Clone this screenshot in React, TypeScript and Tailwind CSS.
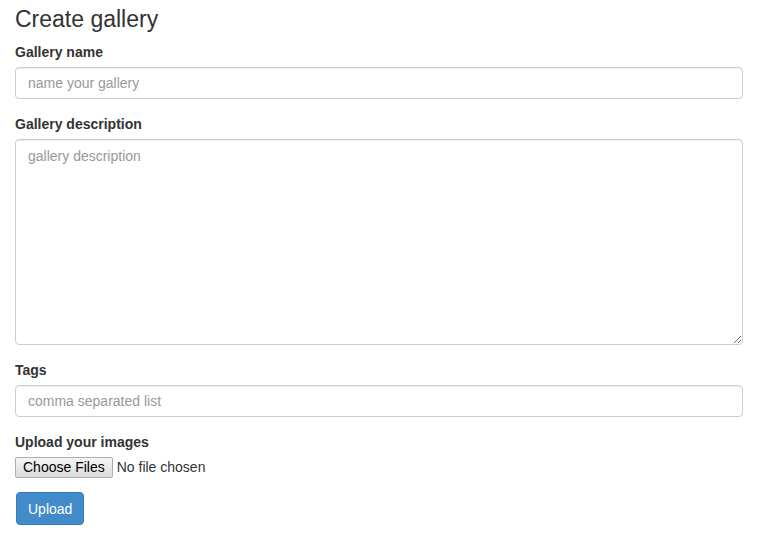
export default function App() {
  const field =
    'block w-full h-[32px] px-3 py-1.5 text-sm text-[#555] bg-white border border-[#ccc] rounded shadow-[inset_0_1px_1px_rgba(0,0,0,0.075)] placeholder:text-[#999] outline-none'
  const label = 'block mb-[5px] text-sm font-bold leading-5 text-[#333]'

  return (
    <div className="min-h-[560px] bg-white pl-[15px] pr-[18px] font-['Liberation_Sans',Arial,sans-serif] text-sm text-[#333]">
      <h3 className="pt-[6px] mb-[10px] text-[23px] leading-[26px] font-normal text-[#333]">Create gallery</h3>
      <form onSubmit={(e) => e.preventDefault()}>
        <div className="mb-[15px]">
          <label className={label}>Gallery name</label>
          <input type="text" placeholder="name your gallery" className={field} />
        </div>

        <div className="mb-[15px]">
          <label className={label}>Gallery description</label>
          <textarea
            placeholder="gallery description"
            className="block w-full h-[206px] px-3 py-1.5 text-sm leading-5 text-[#555] bg-white border border-[#ccc] rounded shadow-[inset_0_1px_1px_rgba(0,0,0,0.075)] placeholder:text-[#999] outline-none resize-y"
          />
        </div>

        <div className="mb-[15px]">
          <label className={label}>Tags</label>
          <input type="text" placeholder="comma separated list" className={field} />
        </div>

        <div className="mb-[15px]">
          <label className={label}>Upload your images</label>
          <div className="flex items-center h-5">
            <button
              type="button"
              className="h-[21px] px-[7px] text-sm leading-4 text-black border border-[#adadad] rounded-[2px] bg-gradient-to-b from-[#f5f5f5] to-[#dcdcdc]"
            >
              Choose Files
            </button>
            <span className="ml-1 text-sm text-[#333]">No file chosen</span>
          </div>
        </div>

        <button
          type="submit"
          className="ml-px h-[33px] px-[11px] text-sm text-white bg-[#428bca] border border-[#357ebd] rounded"
        >
          Upload
        </button>
      </form>
    </div>
  )
}
